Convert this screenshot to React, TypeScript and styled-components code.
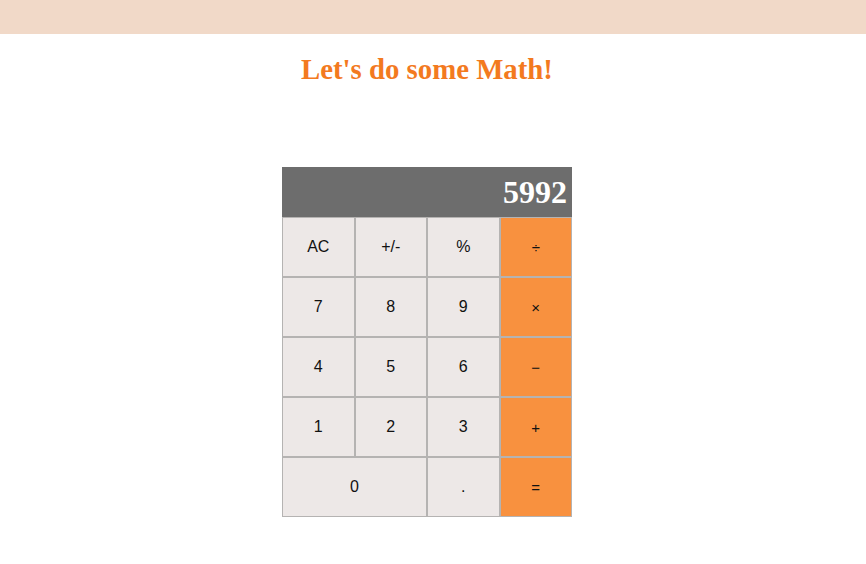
import React from "react";
import styled, { createGlobalStyle } from "styled-components";

const Global = createGlobalStyle`
  html, body { margin: 0; padding: 0; background: #ffffff; }
  body { font-family: "Liberation Serif", "Times New Roman", serif; }
`;

const TopBar = styled.header`
  height: 34px;
  background: #f1d9c8;
`;

const Main = styled.main`
  margin-right: 12px;
`;

const Title = styled.h1`
  margin: 19px 0 0;
  height: 32px;
  line-height: 32px;
  text-align: center;
  font-family: "Liberation Serif", "Times New Roman", serif;
  font-weight: bold;
  font-size: 28.8px;
  color: #f37a1f;
`;

const Calculator = styled.div`
  width: 290px;
  margin: 82px auto 0;
`;

const Display = styled.div`
  height: 50px;
  background: #6d6d6d;
  color: #ffffff;
  font-family: "Liberation Serif", "Times New Roman", serif;
  font-weight: bold;
  font-size: 32px;
  line-height: 50px;
  text-align: right;
  padding-right: 5px;
  box-sizing: border-box;
`;

const Keys = styled.div`
  display: grid;
  grid-template-columns: repeat(4, 1fr);
  grid-auto-rows: 60px;
`;

const Key = styled.button<{ $op?: boolean; $wide?: boolean }>`
  grid-column: ${(p) => (p.$wide ? "span 2" : "auto")};
  margin: 0;
  padding: 0;
  border: 1px solid #b5b3b2;
  background: ${(p) => (p.$op ? "#f8913f" : "#ede8e7")};
  color: #111111;
  font-family: "Liberation Sans", Arial, sans-serif;
  font-size: ${(p) => (p.$op ? "15px" : "16px")};
  cursor: pointer;
`;

const keys: { label: string; op?: boolean; wide?: boolean }[] = [
  { label: "AC" },
  { label: "+/-" },
  { label: "%" },
  { label: "÷", op: true },
  { label: "7" },
  { label: "8" },
  { label: "9" },
  { label: "×", op: true },
  { label: "4" },
  { label: "5" },
  { label: "6" },
  { label: "−", op: true },
  { label: "1" },
  { label: "2" },
  { label: "3" },
  { label: "+", op: true },
  { label: "0", wide: true },
  { label: "." },
  { label: "=", op: true },
];

export default function App() {
  return (
    <>
      <Global />
      <TopBar />
      <Main>
        <Title>Let's do some Math!</Title>
        <Calculator>
          <Display>5992</Display>
          <Keys>
            {keys.map((k) => (
              <Key key={k.label} $op={k.op} $wide={k.wide}>
                {k.label}
              </Key>
            ))}
          </Keys>
        </Calculator>
      </Main>
    </>
  );
}
